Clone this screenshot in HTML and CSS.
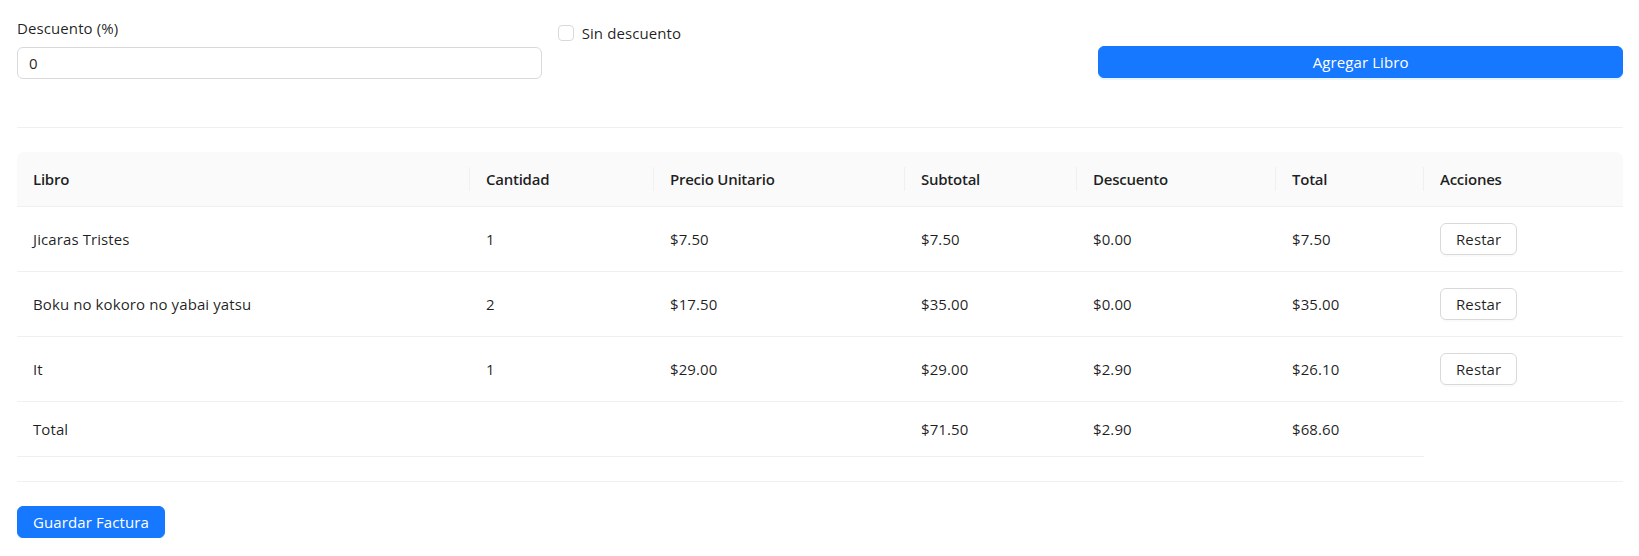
FILE: index.html
```html
<!DOCTYPE html>
<html lang="es">
<head>
<meta charset="utf-8">
<title>Factura</title>
<link rel="stylesheet" href="styles.css">
</head>
<body>
<div class="page">
  <div class="top-row">
    <div class="field">
      <label class="label" for="desc">Descuento (%)</label>
      <input id="desc" class="input" type="text" value="0">
    </div>
    <div class="field">
      <label class="check">
        <span class="check-box"></span>
        <span class="check-text">Sin descuento</span>
      </label>
    </div>
    <div class="field field-btn">
      <button class="btn btn-primary btn-block">Agregar Libro</button>
    </div>
  </div>

  <div class="divider"></div>

  <table class="table">
    <colgroup>
      <col class="c1"><col class="c2"><col class="c3"><col class="c4"><col class="c5"><col class="c6"><col class="c7">
    </colgroup>
    <thead>
      <tr>
        <th>Libro</th>
        <th>Cantidad</th>
        <th>Precio Unitario</th>
        <th>Subtotal</th>
        <th>Descuento</th>
        <th>Total</th>
        <th>Acciones</th>
      </tr>
    </thead>
    <tbody>
      <tr>
        <td>Jicaras Tristes</td>
        <td>1</td>
        <td>$7.50</td>
        <td>$7.50</td>
        <td>$0.00</td>
        <td>$7.50</td>
        <td><button class="btn btn-default">Restar</button></td>
      </tr>
      <tr>
        <td>Boku no kokoro no yabai yatsu</td>
        <td>2</td>
        <td>$17.50</td>
        <td>$35.00</td>
        <td>$0.00</td>
        <td>$35.00</td>
        <td><button class="btn btn-default">Restar</button></td>
      </tr>
      <tr>
        <td>It</td>
        <td>1</td>
        <td>$29.00</td>
        <td>$29.00</td>
        <td>$2.90</td>
        <td>$26.10</td>
        <td><button class="btn btn-default">Restar</button></td>
      </tr>
      <tr>
        <td>Total</td>
        <td></td>
        <td></td>
        <td>$71.50</td>
        <td>$2.90</td>
        <td>$68.60</td>
      </tr>
    </tbody>
  </table>

  <div class="divider"></div>

  <button class="btn btn-primary">Guardar Factura</button>
</div>
</body>
</html>
```

FILE: styles.css
```css
* { box-sizing: border-box; }

body {
  margin: 0;
  background: #ffffff;
  font-family: "Open Sans", "Liberation Sans", sans-serif;
  font-size: 15px;
  letter-spacing: 0.1px;
  line-height: 22px;
  color: rgba(0, 0, 0, 0.88);
}

.page {
  padding: 17px 16px 0 17px;
}

.top-row {
  display: grid;
  grid-template-columns: repeat(3, 1fr);
  column-gap: 16px;
}

.field {
  margin-bottom: 24px;
}

.label {
  display: block;
  line-height: 22px;
  padding-bottom: 8px;
}

.input {
  display: block;
  width: 100%;
  height: 32px;
  padding: 4px 11px;
  border: 1px solid #d9d9d9;
  border-radius: 6px;
  font-family: inherit;
  font-size: 15px;
  line-height: 22px;
  color: rgba(0, 0, 0, 0.88);
  background: #fff;
  outline: none;
}

.check {
  display: flex;
  align-items: center;
  height: 32px;
  cursor: pointer;
}

.check-box {
  width: 16px;
  height: 16px;
  border: 1px solid #d9d9d9;
  border-radius: 4px;
  background: #fff;
  flex: none;
}

.check-text {
  padding: 0 8px;
}

.field-btn {
  padding-top: 29px;
}

.btn {
  height: 32px;
  padding: 4px 15px;
  border-radius: 6px;
  font-family: inherit;
  font-size: 15px;
  letter-spacing: 0.1px;
  line-height: 22px;
  cursor: pointer;
}

.btn-primary {
  background: #1677ff;
  color: #fff;
  border: 1px solid #1677ff;
  box-shadow: 0 2px 0 rgba(5, 145, 255, 0.1);
}

.btn-block {
  display: block;
  width: 100%;
}

.btn-default {
  background: #fff;
  color: rgba(0, 0, 0, 0.88);
  border: 1px solid #d9d9d9;
  box-shadow: 0 2px 0 rgba(0, 0, 0, 0.02);
}

.divider {
  border-top: 1px solid rgba(5, 5, 5, 0.06);
  margin: 24px 0;
}

.table {
  width: 100%;
  table-layout: fixed;
  border-collapse: separate;
  border-spacing: 0;
}

.c1 { width: 453px; }
.c2 { width: 184px; }
.c3 { width: 251px; }
.c4 { width: 172px; }
.c5 { width: 199px; }
.c6 { width: 148px; }
.c7 { width: 199px; }

.table th {
  position: relative;
  background: #fafafa;
  padding: 16px;
  font-weight: 600;
  letter-spacing: -0.25px;
  text-align: left;
  color: rgba(0, 0, 0, 0.88);
  border-bottom: 1px solid #f0f0f0;
}

.table th:first-child { border-top-left-radius: 8px; }
.table th:last-child { border-top-right-radius: 8px; }

.table th:not(:last-child)::before {
  content: "";
  position: absolute;
  top: 50%;
  right: 0;
  width: 1px;
  height: 1.6em;
  background: #f0f0f0;
  transform: translateY(-50%);
}

.table td {
  padding: 16px;
  border-bottom: 1px solid #f0f0f0;
  vertical-align: middle;
}
```
